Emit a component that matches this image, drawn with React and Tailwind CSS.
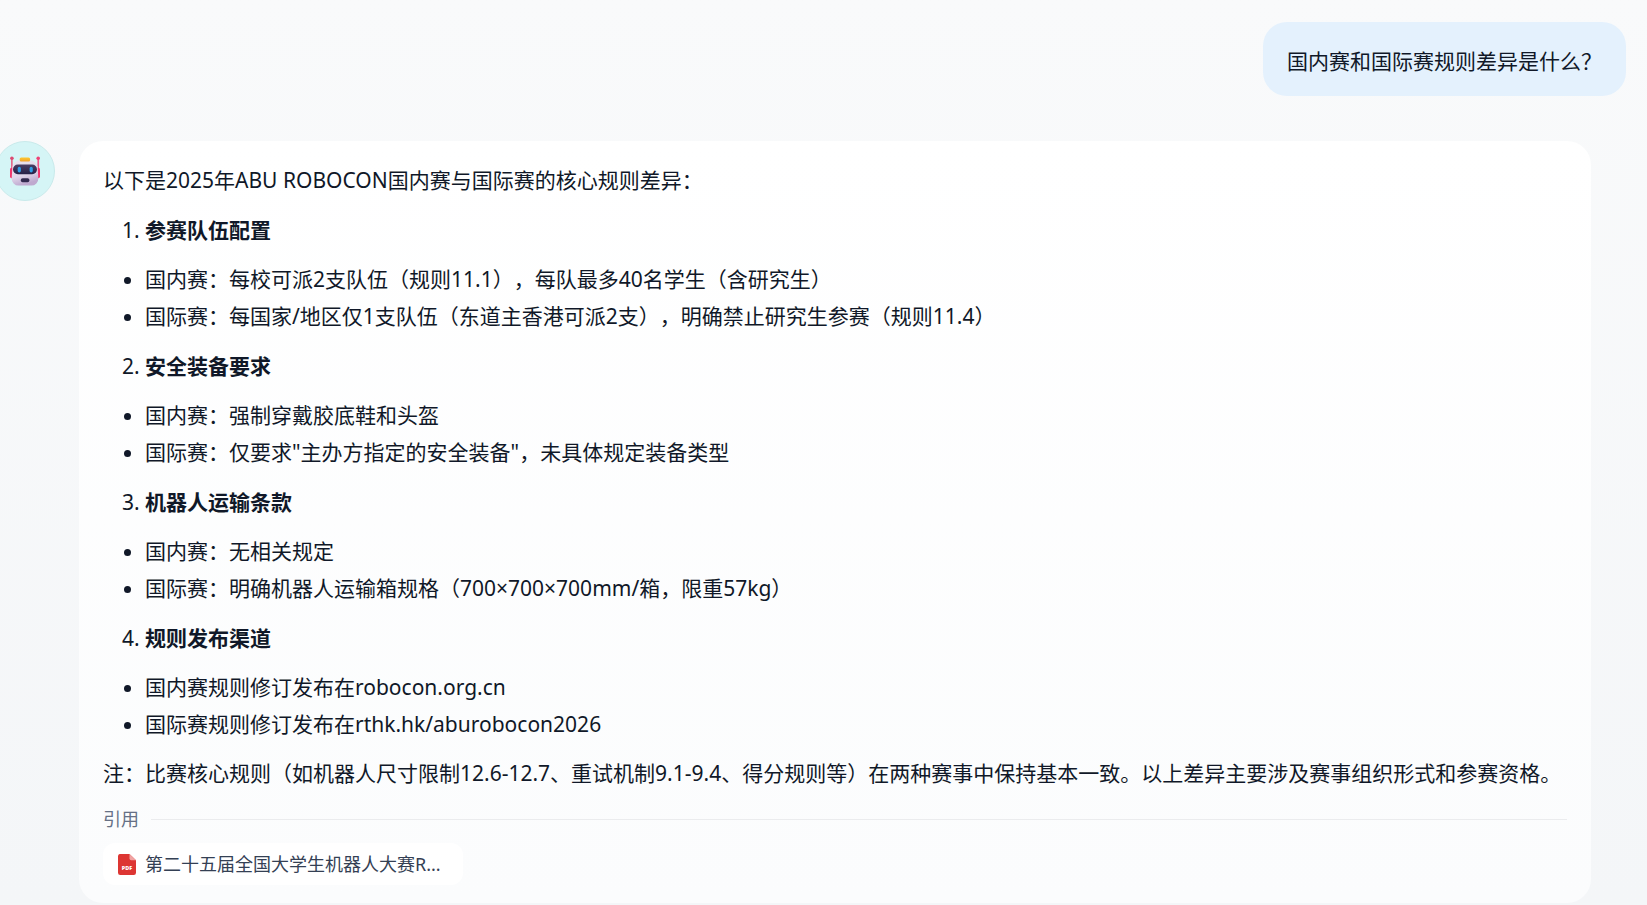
function RobotAvatar() {
  return (
    <svg viewBox="0 0 32 32" className="size-8" role="img" aria-label="机器人">
      <defs>
        <linearGradient id="head" x1="0" y1="0" x2="0.3" y2="1">
          <stop offset="0" stopColor="#ece4f0" />
          <stop offset="0.65" stopColor="#e0d6ea" />
          <stop offset="1" stopColor="#bfa9cf" />
        </linearGradient>
        <linearGradient id="visor" x1="0" y1="0" x2="0" y2="1">
          <stop offset="0" stopColor="#4a3e63" />
          <stop offset="1" stopColor="#262048" />
        </linearGradient>
        <linearGradient id="cap" x1="0" y1="0" x2="0" y2="1">
          <stop offset="0" stopColor="#fdc72f" />
          <stop offset="1" stopColor="#f3a32c" />
        </linearGradient>
      </defs>
      <rect x="2" y="3" width="1.7" height="12" rx="0.8" fill="#e66a8e" />
      <rect x="28.4" y="3" width="1.7" height="12" rx="0.8" fill="#f4558a" />
      <circle cx="2.9" cy="3.2" r="1.8" fill="#dc4a72" />
      <circle cx="29.2" cy="3.2" r="1.8" fill="#ee4276" />
      <rect x="1" y="12.8" width="4" height="10.4" rx="1.6" fill="#f0376d" />
      <rect x="27" y="12.8" width="4" height="10.4" rx="1.6" fill="#f4316a" />
      <path d="M11 5.2h10a8 8 0 0 1 7.6 6.6l.7 11.4a7 7 0 0 1-7 7.4H9.7a7 7 0 0 1-7-7.4l.7-11.4A8 8 0 0 1 11 5.2z" fill="url(#head)" />
      <rect x="10.7" y="2.6" width="10.4" height="3.9" rx="1.5" fill="url(#cap)" />
      <rect x="4" y="9.6" width="24" height="9.6" rx="4.8" fill="url(#visor)" />
      <rect x="8.7" y="11.8" width="3.2" height="5.6" rx="1.6" fill="#2f9de6" />
      <rect x="20.6" y="11.8" width="3.2" height="5.6" rx="1.6" fill="#2f9de6" />
      <rect x="11.8" y="23.3" width="8.6" height="3.9" rx="1.8" fill="#332a50" />
    </svg>
  );
}

function PdfIcon() {
  return (
    <svg viewBox="0 0 18 21" className="h-[21px] w-[18px] shrink-0" aria-hidden="true">
      <path d="M2.4 0H11.5L18 6.2V18.8A2.2 2.2 0 0 1 15.8 21H2.2A2.2 2.2 0 0 1 0 18.8V2.2A2.2 2.2 0 0 1 2.4 0Z" fill="#dd3633" />
      <path d="M11.5 0L18 6.2H13.2A1.7 1.7 0 0 1 11.5 4.5Z" fill="#f0a3a2" />
      <text x="9" y="16" textAnchor="middle" fontFamily="Open Sans, sans-serif" fontWeight="800" fontSize="5.4" fill="#fff">PDF</text>
    </svg>
  );
}

const sections = [
  {
    title: "参赛队伍配置",
    items: [
      "国内赛：每校可派2支队伍（规则11.1），每队最多40名学生（含研究生）",
      "国际赛：每国家/地区仅1支队伍（东道主香港可派2支），明确禁止研究生参赛（规则11.4）",
    ],
  },
  {
    title: "安全装备要求",
    items: ["国内赛：强制穿戴胶底鞋和头盔", "国际赛：仅要求\"主办方指定的安全装备\"，未具体规定装备类型"],
  },
  {
    title: "机器人运输条款",
    items: ["国内赛：无相关规定", "国际赛：明确机器人运输箱规格（700×700×700mm/箱，限重57kg）"],
  },
  {
    title: "规则发布渠道",
    items: ["国内赛规则修订发布在robocon.org.cn", "国际赛规则修订发布在rthk.hk/aburobocon2026"],
  },
];

export default function App() {
  return (
    <main
      lang="zh-CN"
      className="min-h-screen overflow-hidden bg-linear-to-b from-[#f9fafb] to-[#f4f6f8] pt-[22px] pb-0.5 font-['Noto_Sans','Noto_Sans_CJK_SC',sans-serif] text-[21px] leading-[37px] text-[#101828] [text-spacing-trim:space-all]"
    >
      <div className="flex justify-end pr-[21px]">
        <div className="rounded-3xl bg-[#e4f1fd] px-6 pt-[21px] pb-4">国内赛和国际赛规则差异是什么？</div>
      </div>

      <div className="mt-[45px] flex items-start gap-6 pr-14">
        <div className="-ml-[5px] flex size-[60px] shrink-0 items-center justify-center rounded-full border border-[#c9eaeb] bg-[#d5f5f6]">
          <RobotAvatar />
        </div>

        <article className="min-w-0 flex-1 rounded-3xl bg-linear-to-b from-white to-[#fbfcfd] px-6 pt-[21px] pb-[18px]">
          <p>以下是2025年ABU ROBOCON国内赛与国际赛的核心规则差异：</p>
          {sections.map((section, index) => (
            <section key={section.title}>
              <ol start={index + 1} className="mt-[13px] list-decimal pl-[42px]">
                <li>
                  <strong className="font-bold">{section.title}</strong>
                </li>
              </ol>
              <ul className="mt-3 list-disc pl-[42px]">
                {section.items.map((item) => (
                  <li key={item}>{item}</li>
                ))}
              </ul>
            </section>
          ))}
          <p className="mt-3">
            注：比赛核心规则（如机器人尺寸限制12.6-12.7、重试机制9.1-9.4、得分规则等）在两种赛事中保持基本一致。以上差异主要涉及赛事组织形式和参赛资格。
          </p>

          <div className="mt-[13px] flex items-center gap-3 text-lg leading-7 text-[#667085]">
            <span>引用</span>
            <span className="h-px flex-1 bg-[#ebecee]" />
          </div>
          <a href="#source" className="mt-[10px] flex h-[42px] w-[360px] items-center gap-[9px] rounded-xl bg-white px-[15px] text-lg leading-7 text-[#344054]">
            <PdfIcon />
            <span className="truncate">第二十五届全国大学生机器人大赛R...</span>
          </a>
        </article>
      </div>
    </main>
  );
}
